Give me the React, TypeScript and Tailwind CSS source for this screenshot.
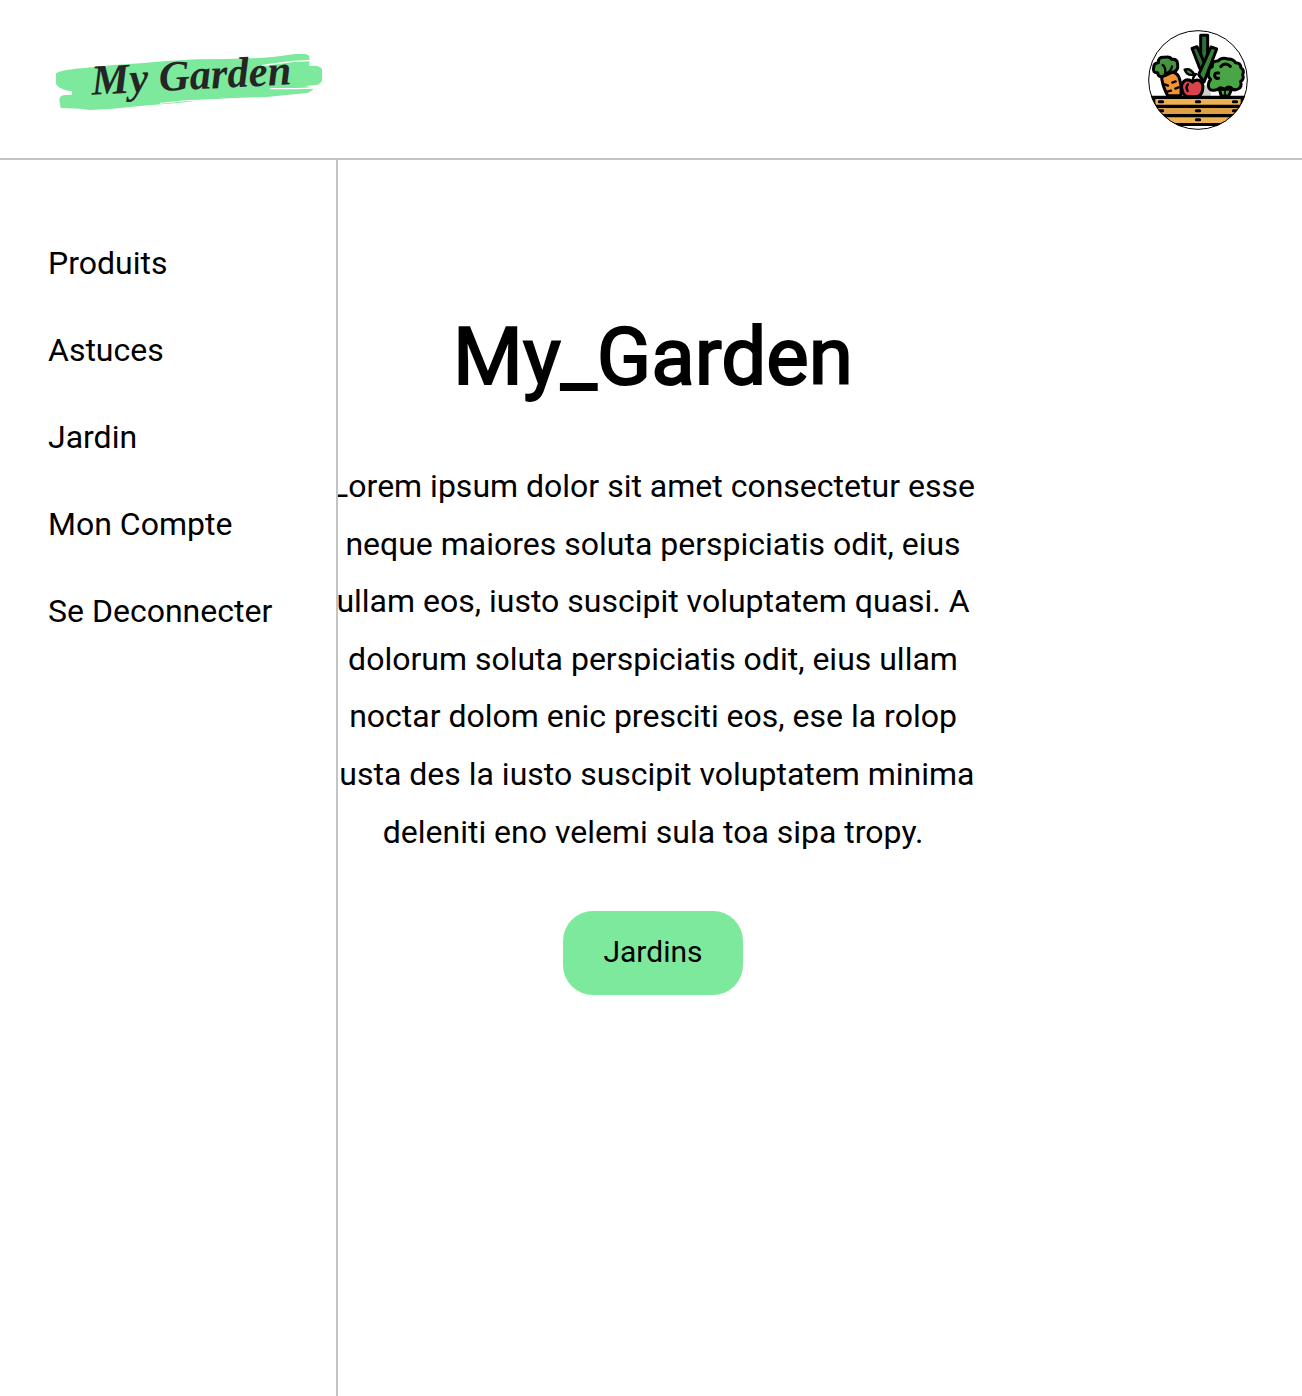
const navItems = ['Produits', 'Astuces', 'Jardin', 'Mon Compte', 'Se Deconnecter'];

function Logo() {
  return (
    <svg viewBox="24 0 840 300" className="h-[100px] w-[280px]" role="img" aria-label="My Garden">
      <path
        fill="#7de99c"
        d="M48 130 C66 120 90 118 158 112 L220 105 L300 100 L380 93 L470 88 L560 87 L660 84 L705 80 L765 72 L795 72 Q808 74 808 84 L808 108 L828 107 Q846 112 846 118 L846 152 Q840 164 828 165 L798 168 L822 176 Q810 188 792 190 L680 201 L560 205 L470 212 L420 218 L300 228 L220 236 L150 240 L120 236 L62 234 L58 208 Q60 196 74 195 L96 195 L96 183 L82 182 Q54 174 48 162 Z"
      />
      <path fill="none" stroke="#fff" strokeWidth="4" d="M808 92 L760 94 L700 102 L665 107" />
      <path fill="none" stroke="#fff" strokeWidth="4" d="M822 174 L770 176 L690 176" />
      <path fill="none" stroke="#fff" strokeWidth="3" d="M360 220 L440 212 L550 208" />
      <text
        x="156"
        y="194"
        transform="rotate(-3 156 194)"
        fill="#252525"
        fontFamily="'Liberation Serif', cursive"
        fontStyle="italic"
        fontWeight="700"
        fontSize="128"
      >
        My Garden
      </text>
    </svg>
  );
}

function GardenBasket() {
  return (
    <svg viewBox="0 0 300 300" className="size-full" aria-hidden="true">
      <defs>
        <clipPath id="disc">
          <circle cx="150" cy="150" r="149" />
        </clipPath>
      </defs>
      <circle cx="150" cy="150" r="149" fill="#fff" />
      <g clipPath="url(#disc)">
        <g transform="translate(-24 -24)" stroke="#000" strokeWidth="9" strokeLinejoin="round" strokeLinecap="round">
          <path d="M192 190 L208 190 L214 224 L186 224 Z" fill="#cfcfcf" stroke="none" />
          <path d="M182 112 V40 H203 V112 L192 128 Z" fill="#2f6f35" />
          <path d="M156 79 L171 74 L197 130 L186 152 L178 136 Z" fill="#2f6f35" />
          <path d="M213 75 L230 81 L206 144 L192 180 L176 158 Z" fill="#36853c" />
          <path d="M238 202 L244 222 H266 L275 202 Z" fill="#4aa546" />
          <path d="M255 206 V220" fill="none" strokeWidth="5" />
          <path
            d="M226 204 Q204 208 205 188 Q206 178 212 172 Q202 164 206 150 Q206 136 217 134 Q215 116 234 117 Q246 104 264 111 Q280 110 286 122 Q302 121 303 138 Q314 144 308 158 Q313 172 302 178 Q307 195 294 201 Q280 208 272 196 Q262 192 255 202 Q240 194 236 200 Q231 205 226 204 Z"
            fill="#4aa546"
          />
          <path d="M242 134 Q256 118 271 133 M236 153 Q223 151 224 161 Q226 171 236 169" fill="none" />
          <path d="M65 168 Q67 150 88 150 Q111 150 117 166 Q125 185 123 221 H83 Q68 193 65 168 Z" fill="#f19436" />
          <path
            d="M75 161 Q54 169 53 152 Q37 153 41 137 Q41 122 55 122 Q54 104 73 106 Q90 102 95 112 Q113 110 113 127 Q115 146 101 150 Q90 152 81 158 Z"
            fill="#43963f"
          />
          <path d="M75 156 Q79 137 68 129 M81 153 Q94 146 96 133" fill="none" strokeWidth="7" />
          <path d="M97 182 L107 178 M74 187 L84 191 M82 209 L93 206 M106 200 L116 196" fill="none" strokeWidth="7" />
          <path
            d="M158 180 Q142 168 131 179 Q121 189 127 207 Q133 226 149 224 H169 Q185 222 188 203 Q192 183 178 175 Q168 171 158 180 Z"
            fill="#d94349"
          />
          <path d="M158 181 Q157 165 168 156 M144 187 Q136 196 143 207" fill="none" strokeWidth="7" />
          <path d="M134 143 Q151 137 163 157 Q143 164 134 143 Z" fill="#43963f" strokeWidth="7" />
        </g>
        <path d="M9 197 H291 V288 H9 Z" fill="#000" />
        <path d="M22 207 H278 V224 H22 Z M22 262 H278 V279 H22 Z" fill="#edb154" />
        <path d="M22 234 H278 V252 H22 Z" fill="#dda047" />
        <path
          d="M34 215 H44 M145 215 H155 M256 215 H266 M34 242 H44 M145 242 H155 M256 242 H266 M145 269 H155"
          stroke="#000"
          strokeWidth="9"
          strokeLinecap="round"
        />
      </g>
      <circle cx="150" cy="150" r="148" fill="none" stroke="#000" strokeWidth="3" />
    </svg>
  );
}

export default function App() {
  return (
    <div className="flex min-h-screen flex-col bg-white font-['Roboto',sans-serif] text-black">
      <header className="flex items-center justify-between border-b-2 border-[#c4c4c4] pt-[30px] pr-[54px] pb-7 pl-12">
        <a href="#accueil">
          <Logo />
        </a>
        <button type="button" aria-label="Mon profil" className="size-[100px] rounded-full">
          <GardenBasket />
        </button>
      </header>

      <div className="grid flex-1 grid-cols-[338px_1fr]">
        <aside className="z-10 col-start-1 row-start-1 border-r-2 border-[#c4c4c4] bg-white px-12 pt-20">
          <nav className="flex flex-col gap-10 text-[32px] leading-[47px] whitespace-nowrap">
            {navItems.map((item) => (
              <a key={item} href="#menu">
                {item}
              </a>
            ))}
          </nav>
        </aside>

        <main className="col-span-2 col-start-1 row-start-1 flex flex-col items-center pt-[148px] pl-1">
          <h1 className="text-[80px] leading-[98px] font-normal [-webkit-text-stroke:2px_black]">My_Garden</h1>
          <p className="mt-[52px] w-1/2 text-center text-[32px] leading-[1.8]">
            Lorem ipsum dolor sit amet consectetur esse neque maiores soluta perspiciatis odit, eius ullam eos, iusto
            suscipit voluptatem quasi. A dolorum soluta perspiciatis odit, eius ullam noctar dolom enic presciti eos, ese
            la rolop iusta des la iusto suscipit voluptatem minima deleniti eno velemi sula toa sipa tropy.
          </p>
          <button type="button" className="mt-[50px] rounded-[30px] bg-[#7de99c] px-10 pt-[25px] pb-[27px] text-[30px] leading-8">
            Jardins
          </button>
        </main>
      </div>
    </div>
  );
}
